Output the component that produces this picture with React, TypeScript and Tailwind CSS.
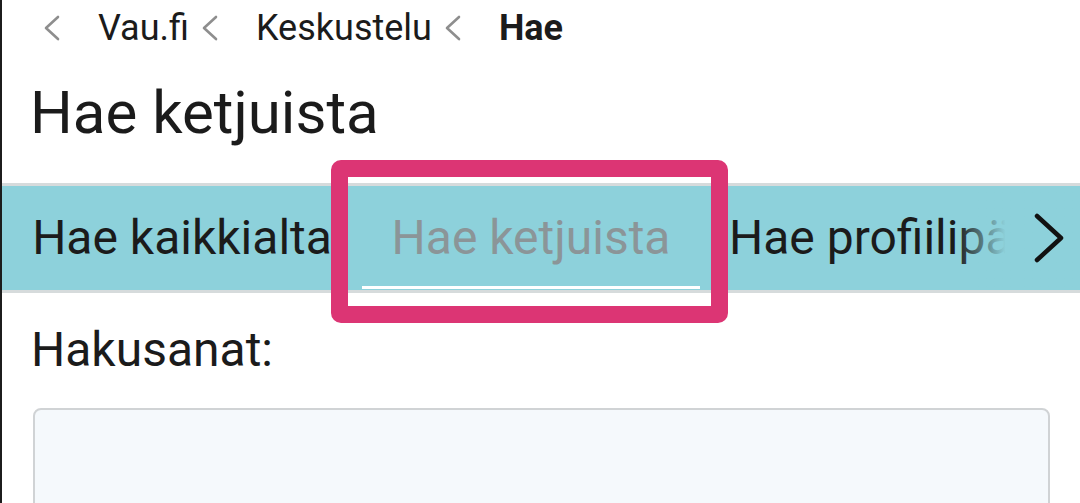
import React from 'react';

const Crumb = () => (
    <svg width="18" height="26" viewBox="0 0 18 26" fill="none" stroke="#8e8e8e" strokeWidth="2.6" strokeLinecap="round" strokeLinejoin="round">
        <polyline points="15,2 3,13 15,24" />
    </svg>
);

export default function App() {
    const tabs = [
        { label: 'Hae kaikkialta', active: false, w: 'w-[360px]' },
        { label: 'Hae ketjuista', active: true, w: 'w-[338px]' },
    ];

    return (
        <div className="relative w-[1080px] h-[503px] overflow-hidden bg-white border-l-2 border-[#1c1c1c] font-['Roboto',sans-serif] text-[#1b1b1b]">
            {/* murupolku */}
            <nav className="flex items-center h-[56px] pl-[41px] text-[36px] leading-[40px]">
                <Crumb />
                <span className="ml-[37px]">Vau.fi</span>
                <span className="ml-[12px]"><Crumb /></span>
                <span className="ml-[37px]">Keskustelu</span>
                <span className="ml-[12px]"><Crumb /></span>
                <span className="ml-[37px] font-bold">Hae</span>
            </nav>

            <h1 className="mt-[21px] pl-[28px] text-[60px] leading-[72px] font-normal">Hae ketjuista</h1>

            {/* välilehdet */}
            <div className="mt-[34px] flex h-[110px] border-y-[3px] border-[#d6dbdc] bg-[#8dd1db]">
                {tabs.map((t) => (
                    <div key={t.label} className={`${t.w} relative flex items-center justify-center text-[48px] leading-[104px] whitespace-nowrap`}>
                        <span className={t.active ? 'text-[#8b9598]' : ''}>{t.label}</span>
                        {t.active && <div className="absolute left-0 right-0 bottom-[1px] h-[3px] bg-white" />}
                    </div>
                ))}
                <div className="relative flex flex-1 items-center pl-[29px] text-[48px] leading-[104px] whitespace-nowrap">
                    <span>Hae profiilipä</span>
                    <div className="absolute top-0 bottom-0 right-0 w-[124px] bg-gradient-to-r from-[#8dd1db00] from-0% to-[#8dd1db] to-40% flex items-center justify-end pr-[15px]">
                        <svg width="32" height="50" viewBox="0 0 32 50" fill="none" stroke="#111" strokeWidth="4.5" strokeLinecap="round" strokeLinejoin="round">
                            <polyline points="4,3 28,25 4,47" />
                        </svg>
                    </div>
                </div>
            </div>

            <label className="block mt-[29px] pl-[29px] text-[48px] leading-[56px]">Hakusanat:</label>

            <div className="mt-[30px] ml-[31px] w-[1017px] h-[160px] rounded-lg border-2 border-[#d0d3d5] bg-[#f5f9fc]" />

            {/* korostus */}
            <div className="absolute left-[329px] top-[160px] w-[397px] h-[163px] rounded-[10px] border-[17px] border-[#dc3574]" />
        </div>
    );
}
